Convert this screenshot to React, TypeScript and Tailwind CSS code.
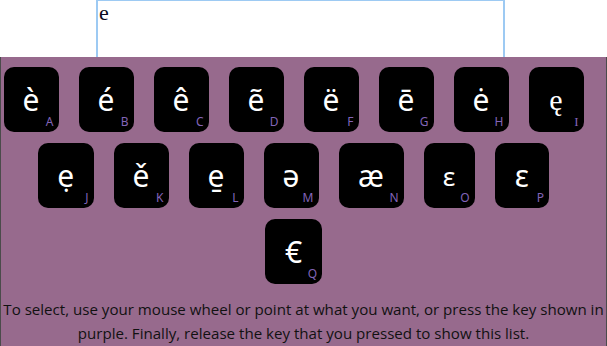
const rows: { ch: string; key: string; w: string; serif?: boolean; small?: boolean }[][] = [
  [
    { ch: "è", key: "A", w: "w-[55px]" },
    { ch: "é", key: "B", w: "w-[55px]" },
    { ch: "ê", key: "C", w: "w-[55px]" },
    { ch: "ẽ", key: "D", w: "w-[55px]" },
    { ch: "ë", key: "F", w: "w-[55px]" },
    { ch: "ē", key: "G", w: "w-[55px]" },
    { ch: "ė", key: "H", w: "w-[55px]" },
    { ch: "ę", key: "I", w: "w-[55px]", serif: true },
  ],
  [
    { ch: "ẹ", key: "J", w: "w-[55.5px]" },
    { ch: "ě", key: "K", w: "w-[55px]" },
    { ch: "e̱", key: "L", w: "w-[55px]" },
    { ch: "ə", key: "M", w: "w-[55px]" },
    { ch: "æ", key: "N", w: "w-[65px]" },
    { ch: "ɛ", key: "O", w: "w-[51px]", small: true },
    { ch: "ε", key: "P", w: "w-[54.5px]" },
  ],
  [{ ch: "€", key: "Q", w: "w-[57px]" }],
];

function Key({ ch, label, w, serif, small }: { ch: string; label: string; w: string; serif?: boolean; small?: boolean }) {
  return (
    <div className={`relative mr-5 flex h-[65px] items-center justify-center rounded-[10px] bg-black ${w}`}>
      <span
        className={`leading-none text-white ${small ? "text-[26px]" : "text-[30px]"} ${
          serif ? "font-['Liberation_Serif',serif]" : "font-['Noto_Sans',sans-serif]"
        }`}
      >
        {ch}
      </span>
      <span
        className={`absolute bottom-[4px] right-[5px] leading-none text-[#8264b8] ${
          label === "I" ? "font-['Liberation_Serif',serif] text-[13px]" : "font-['Noto_Sans',sans-serif] text-[12px]"
        }`}
      >
        {label}
      </span>
    </div>
  );
}

export default function App() {
  return (
    <div className="h-[346px] w-[607px] overflow-hidden bg-white">
      {/* text box, cut off by the picker panel below */}
      <div className="ml-[96px] h-[57px] w-[409px] border-2 border-b-0 border-t-[1px] border-[#9dcaf3]">
        <div className="mt-[-1px] pl-px font-['Liberation_Serif',serif] text-[22px] leading-[26px] text-[#0a0a20]">e</div>
      </div>

      {/* accent picker */}
      <div className="h-[289px] border-x border-[#4b4b4b] bg-[#976a8d] pt-[10px]">
        <div className="flex flex-col gap-[11px]">
          {rows.map((row, i) => (
            <div key={i} className="flex justify-center">
              {row.map((k) => (
                <Key key={k.key} ch={k.ch} label={k.key} w={k.w} serif={k.serif} small={k.small} />
              ))}
            </div>
          ))}
        </div>
        <p className="mt-[13px] px-[2px] text-center font-['Open_Sans',sans-serif] text-[15.1px] leading-[24px] text-[#111]">
          To select, use your mouse wheel or point at what you want, or press the key shown in purple. Finally, release
          the key that you pressed to show this list.
        </p>
      </div>
    </div>
  );
}
